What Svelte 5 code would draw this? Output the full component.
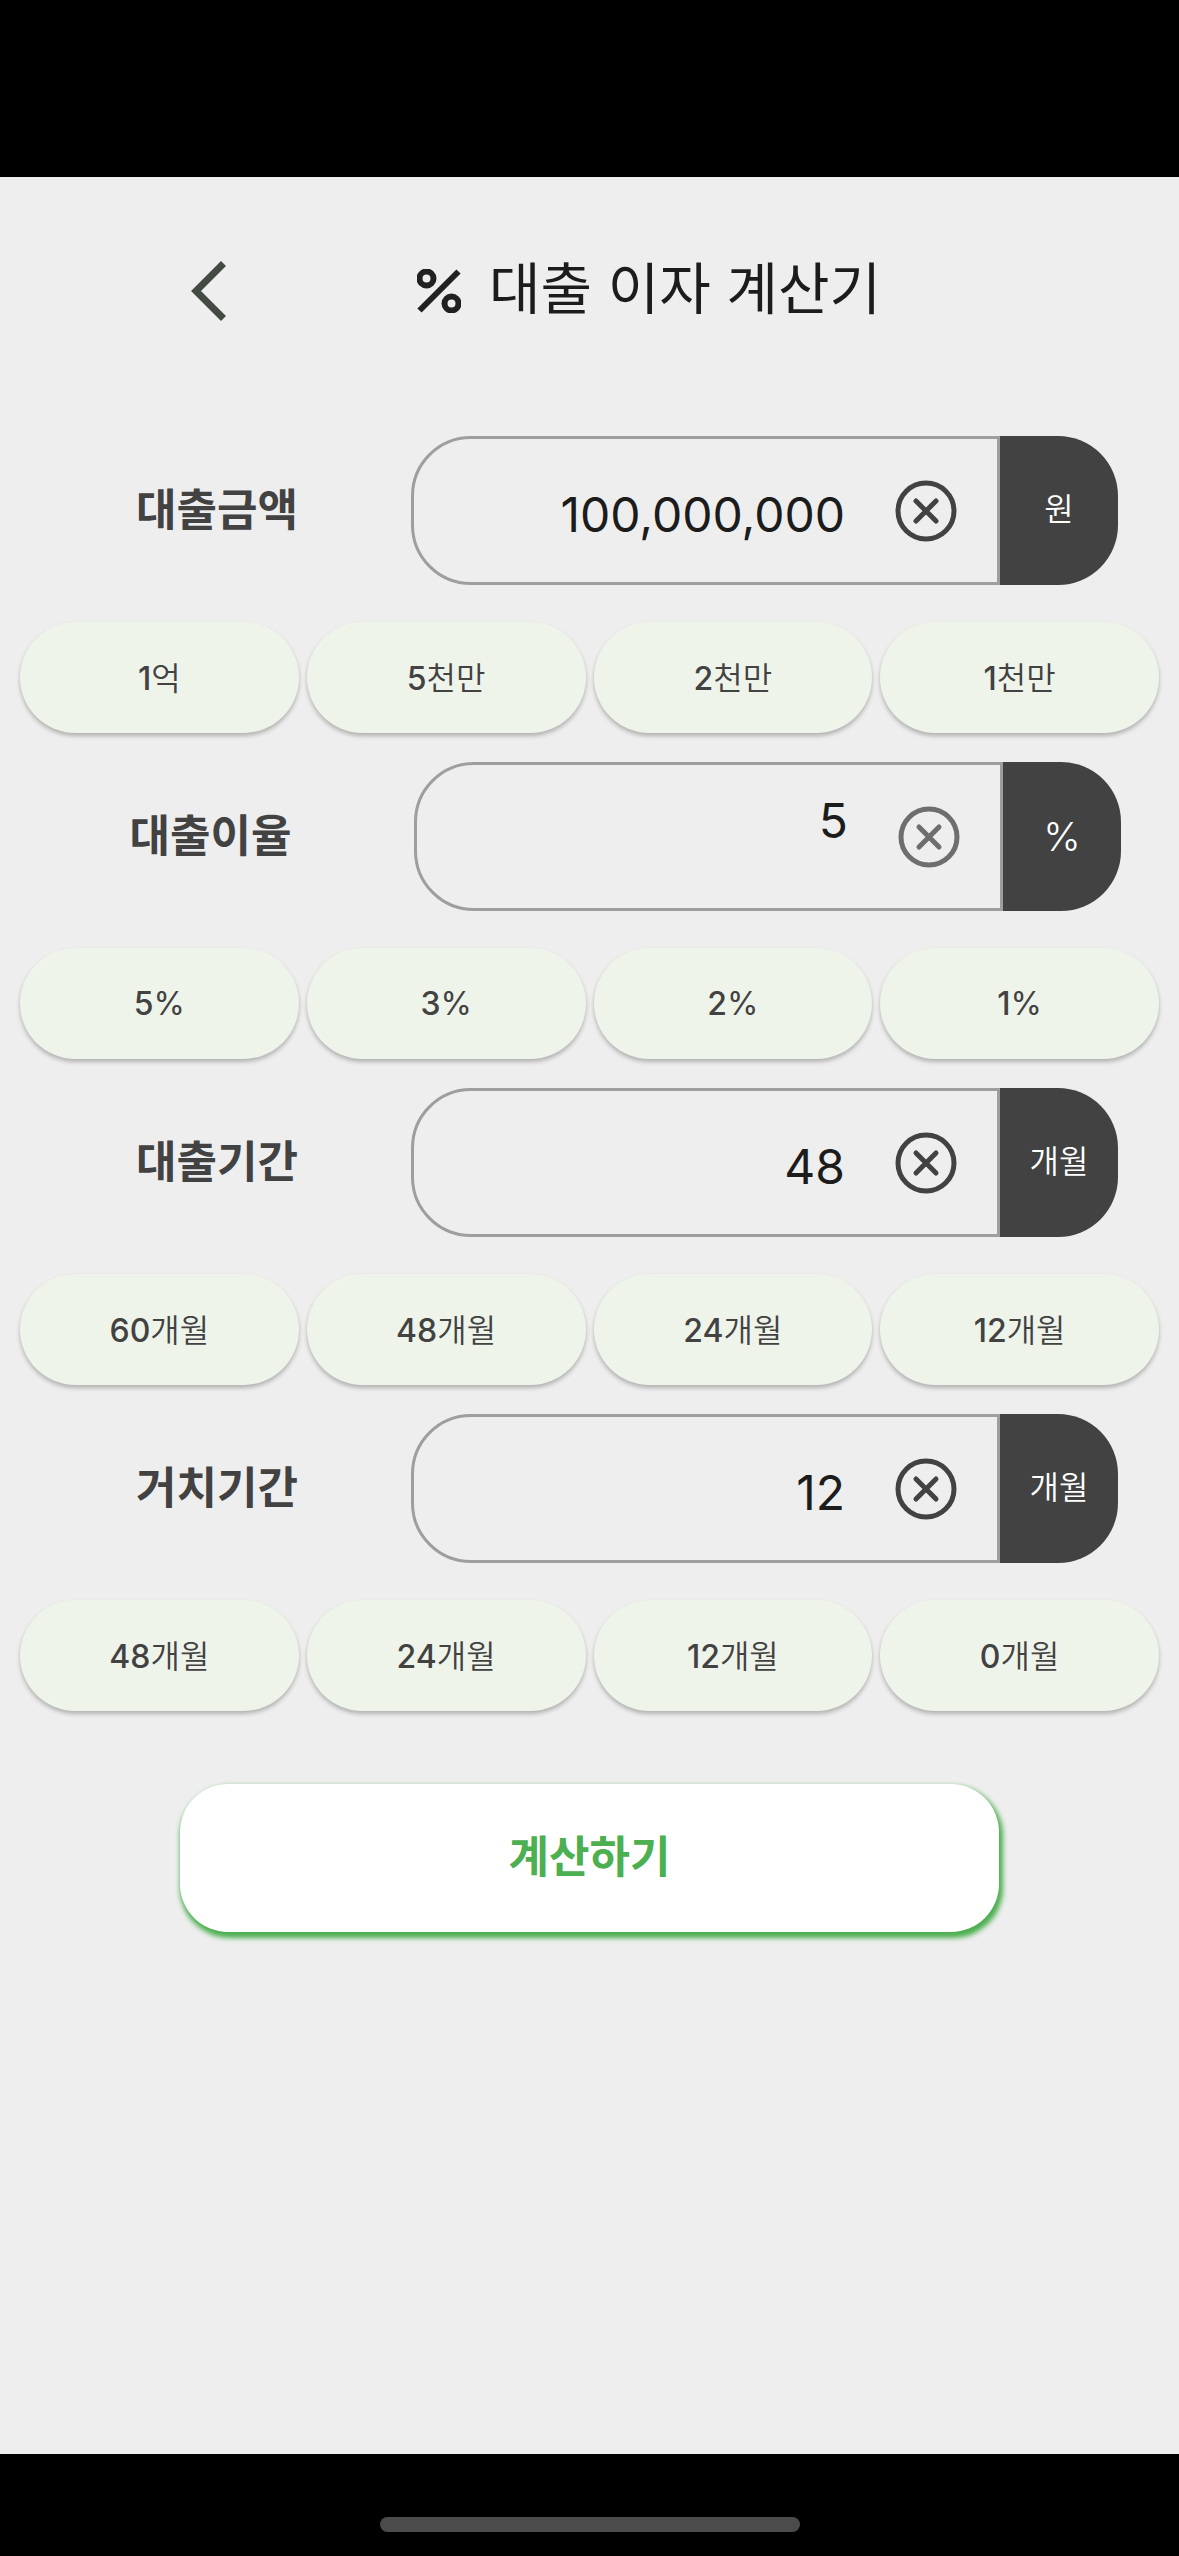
<script lang="ts">
  type Preset = { value: string; unit: string };

  type Field = {
    id: string;
    label: string;
    unit: string;
    value: string;
    rate?: boolean;
    presets: Preset[];
  };

  const months = (values: string[]): Preset[] =>
    values.map((value) => ({ value, unit: '개월' }));

  let fields: Field[] = $state([
    {
      id: 'amount',
      label: '대출금액',
      unit: '원',
      value: '100,000,000',
      presets: [
        { value: '1', unit: '억' },
        { value: '5', unit: '천만' },
        { value: '2', unit: '천만' },
        { value: '1', unit: '천만' }
      ]
    },
    {
      id: 'rate',
      label: '대출이율',
      unit: '%',
      value: '5',
      rate: true,
      presets: ['5', '3', '2', '1'].map((value) => ({ value, unit: '%' }))
    },
    {
      id: 'term',
      label: '대출기간',
      unit: '개월',
      value: '48',
      presets: months(['60', '48', '24', '12'])
    },
    {
      id: 'grace',
      label: '거치기간',
      unit: '개월',
      value: '12',
      presets: months(['48', '24', '12', '0'])
    }
  ]);

  const multipliers: Record<string, number> = { 억: 100000000, 천만: 10000000 };

  function applyPreset(field: Field, preset: Preset) {
    const multiplier = multipliers[preset.unit] ?? 1;
    field.value = (Number(preset.value) * multiplier).toLocaleString('en-US');
  }
</script>

<div class="screen">
  <main>
    <header>
      <button class="back" type="button" aria-label="뒤로">
        <svg viewBox="0 0 36 60">
          <path d="M32.500 2.500 L5 30 L32.500 57.500" />
        </svg>
      </button>
      <div class="title">
        <svg viewBox="0 0 44 44">
          <circle cx="9.500" cy="9.500" r="7" />
          <circle cx="34.500" cy="34.500" r="7" />
          <path d="M2.500 41.500 L41.500 2.500" />
        </svg>
        <h1>대출 이자 계산기</h1>
      </div>
    </header>

    <form onsubmit={(event) => event.preventDefault()}>
      {#each fields as field (field.id)}
        <div class="row" class:rate={field.rate}>
          <label for={field.id}>{field.label}</label>
          <div class="field">
            <div class="box">
              <input id={field.id} type="text" inputmode="decimal" bind:value={field.value} />
              <button
                class="clear"
                type="button"
                aria-label="지우기"
                onclick={() => (field.value = '')}
              >
                <svg viewBox="0 0 62 62">
                  <circle cx="31" cy="31" r="28" />
                  <path d="M21 21 L41 41 M41 21 L21 41" />
                </svg>
              </button>
            </div>
            <span class="unit">{field.unit}</span>
          </div>
        </div>

        <div class="presets" class:percent={field.rate}>
          {#each field.presets as preset}
            <button type="button" onclick={() => applyPreset(field, preset)}>
              <b>{preset.value}</b>{preset.unit}
            </button>
          {/each}
        </div>
      {/each}

      <button class="submit" type="submit">계산하기</button>
    </form>
  </main>

  <footer><span class="home"></span></footer>
</div>

<style>
  :global(body) {
    margin: 0;
    background: #000;
  }

  .screen {
    display: flex;
    flex-direction: column;
    box-sizing: border-box;
    min-height: 100vh;
    padding-top: 177px;
    background: #000;
    color: #424242;
    font-family: Inter, 'Noto Sans CJK KR', sans-serif;
  }

  main {
    flex: 1;
    background: #eee;
  }

  button {
    padding: 0;
    border: 0;
    background: none;
    color: inherit;
    font: inherit;
    cursor: pointer;
  }

  svg {
    display: block;
    fill: none;
  }

  header {
    display: flex;
    align-items: center;
    height: 228px;
    padding-left: 191px;
  }

  .back svg {
    width: 36px;
    height: 60px;
    stroke: #424a42;
    stroke-width: 7;
  }

  .title {
    display: flex;
    align-items: center;
    gap: 28px;
    margin-left: 190px;
  }

  .title svg {
    width: 44px;
    height: 44px;
    stroke: #212121;
    stroke-width: 6;
  }

  h1 {
    margin: 0;
    padding-bottom: 4px;
    color: #1b1c1b;
    font-size: 56px;
    font-weight: 400;
    line-height: 72px;
    white-space: nowrap;
  }

  form {
    padding-top: 31px;
  }

  .row {
    display: flex;
    align-items: center;
    padding: 0 61px 0 23px;
  }

  .row.rate {
    padding: 0 58px 0 7px;
  }

  label {
    flex: 1;
    padding-bottom: 8px;
    font-size: 44px;
    font-weight: 700;
    text-align: center;
    white-space: nowrap;
  }

  .field {
    display: flex;
    flex: 0 1 707px;
    min-width: 0;
    height: 149px;
  }

  .box {
    display: flex;
    flex: 1;
    align-items: center;
    gap: 50px;
    box-sizing: border-box;
    min-width: 0;
    padding-right: 40px;
    border: 3px solid #9e9e9e;
    border-radius: 60px 0 0 60px;
  }

  input {
    flex: 1;
    box-sizing: border-box;
    width: 0;
    min-width: 0;
    height: 100%;
    padding: 8px 0 0 40px;
    border: 0;
    outline: 0;
    background: none;
    color: #1b1c1b;
    font: 400 48px Inter, 'Noto Sans CJK KR', sans-serif;
    text-align: right;
  }

  .rate input {
    padding: 0 0 32px 40px;
  }

  .clear svg {
    width: 62px;
    height: 62px;
    stroke: #424242;
    stroke-width: 5;
    stroke-linecap: round;
  }

  .rate .clear svg {
    stroke: #6e6e6e;
  }

  .unit {
    display: flex;
    flex: 0 0 118px;
    align-items: center;
    justify-content: center;
    box-sizing: border-box;
    padding-bottom: 8px;
    border-radius: 0 60px 60px 0;
    background: #424242;
    color: #fff;
    font-size: 32px;
    font-weight: 350;
  }

  .rate .unit {
    padding-bottom: 0;
    font-size: 40px;
  }

  .presets {
    display: grid;
    grid-template-columns: repeat(4, 1fr);
    gap: 8px;
    padding: 37px 20px 29px;
  }

  .presets button {
    height: 111px;
    padding-bottom: 4px;
    border-radius: 56px;
    background: #eff4ea;
    box-shadow: 0 3px 4px rgba(0, 0, 0, 0.25);
    font-size: 32px;
    font-weight: 350;
  }

  .presets.percent button {
    padding-bottom: 0;
    font-weight: 400;
  }

  .presets b {
    font-weight: 500;
  }

  .submit {
    display: block;
    width: calc(100% - 360px);
    height: 148px;
    margin: 44px auto 0;
    padding-bottom: 8px;
    border-radius: 48px;
    background: #fff;
    box-shadow: 2px 4px 5px 2px #4caf50;
    color: #4caf50;
    font-size: 44px;
    font-weight: 700;
  }

  footer {
    display: flex;
    align-items: flex-end;
    justify-content: center;
    box-sizing: border-box;
    height: 102px;
    padding-bottom: 24px;
  }

  .home {
    width: 420px;
    height: 15px;
    border-radius: 8px;
    background: #4b4b4b;
  }
</style>
